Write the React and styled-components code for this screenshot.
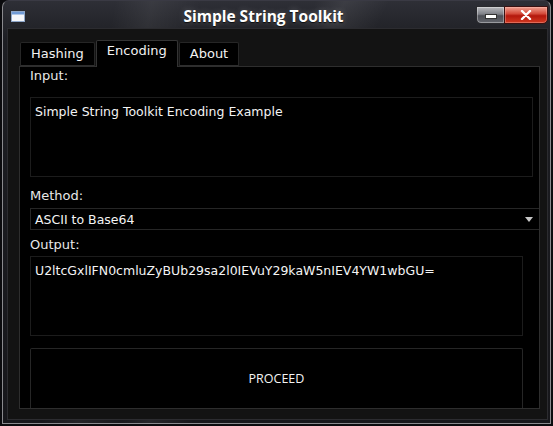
import React from "react";
import styled, { createGlobalStyle } from "styled-components";

const GlobalStyle = createGlobalStyle`
  html, body {
    margin: 0;
    padding: 0;
    background: #0b0b0e;
  }
  body {
    font-family: "DejaVu Sans", Verdana, sans-serif;
    font-size: 12px;
    color: #f0f0f0;
  }
`;

function App() {
  return (
    <>
      <GlobalStyle />
      <Window>
        <TitleBar>
          <AppIcon>
            <svg width="14" height="11" viewBox="0 0 14 11">
              <rect x="0.5" y="0.5" width="13" height="10" fill="#f4f6fa" stroke="#8ea6c8" />
              <rect x="1" y="1" width="12" height="2.5" fill="#6f9ad6" />
            </svg>
          </AppIcon>
          <Title>Simple String Toolkit</Title>
          <Controls>
            <MinButton>
              <span />
            </MinButton>
            <CloseButton>
              <svg width="12" height="10" viewBox="0 0 12 10">
                <path d="M2 1 L10 9 M10 1 L2 9" stroke="#fff" strokeWidth="2.4" strokeLinecap="round" />
              </svg>
            </CloseButton>
          </Controls>
        </TitleBar>
        <Client>
          <Tabs>
            <Tab>Hashing</Tab>
            <Tab active>Encoding</Tab>
            <Tab>About</Tab>
          </Tabs>
          <Pane>
            <Label>Input:</Label>
            <TextBox $mt={13} $right={6}>Simple String Toolkit Encoding Example</TextBox>
            <Label $mt={11}>Method:</Label>
            <Combo>
              ASCII to Base64
              <Arrow />
            </Combo>
            <Label $mt={7}>Output:</Label>
            <TextBox $mt={3} $right={16}>U2ltcGxlIFN0cmluZyBUb29sa2l0IEVuY29kaW5nIEV4YW1wbGU=</TextBox>
            <Proceed>PROCEED</Proceed>
          </Pane>
        </Client>
      </Window>
    </>
  );
}

const Window = styled.div`
  box-sizing: border-box;
  width: 549px;
  height: 424px;
  margin: 0 2px;
  display: flex;
  flex-direction: column;
  border: 1px solid #8a8a8e;
  border-top-color: #3a3a44;
  border-radius: 7px 7px 0 0;
  background:
    linear-gradient(115deg, transparent 42%, rgba(255,255,255,0.07) 46%, transparent 52%),
    linear-gradient(100deg, transparent 18%, rgba(255,255,255,0.06) 24%, transparent 32%),
    linear-gradient(180deg, #2e2f36 0%, #1d1e23 40px, #17171b 100%);
  padding: 0 2px 3px 4px;
`;

const TitleBar = styled.div`
  height: 27px;
  display: flex;
  align-items: flex-start;
`;

const AppIcon = styled.div`
  margin: 10px 0 0 4px;
  width: 14px;
  height: 11px;
  display: flex;
`;

const Title = styled.div`
  flex: 1;
  text-align: center;
  padding: 4px 0 0 26px;
  font-family: "Open Sans", "DejaVu Sans", sans-serif;
  font-weight: 700;
  font-size: 15.5px;
  color: #fff;
  text-shadow: 0 0 6px rgba(255,255,255,0.25), 0 1px 1px #000;
`;

const Controls = styled.div`
  display: flex;
  margin: 5px 0 0 0;
`;

const MinButton = styled.div`
  box-sizing: border-box;
  width: 28px;
  height: 18px;
  border: 1px solid #2a2a2e;
  border-right: none;
  border-radius: 0 0 0 5px;
  background: linear-gradient(180deg, #b8b9bd 0%, #7d7f86 45%, #4c4e55 55%, #64666d 100%);
  box-shadow: inset 0 0 0 1px rgba(255,255,255,0.35);
  display: flex;
  align-items: center;
  justify-content: center;

  span {
    display: block;
    width: 10px;
    height: 3px;
    margin-top: 3px;
    background: #fff;
    border: 1px solid #333;
  }
`;

const CloseButton = styled.div`
  box-sizing: border-box;
  width: 44px;
  height: 18px;
  border: 1px solid #3a1010;
  border-radius: 0 0 5px 0;
  background: linear-gradient(180deg, #f0a090 0%, #d44a3a 42%, #b3170c 55%, #d23a22 100%);
  box-shadow: inset 0 0 0 1px rgba(255,200,190,0.35);
  display: flex;
  align-items: center;
  justify-content: center;
`;

const Client = styled.div`
  flex: 1;
  background: #131313;
  border: 1px solid #2c2c30;
  padding: 11px 7px 10px 11px;
  display: flex;
  flex-direction: column;
`;

const Tabs = styled.div`
  display: flex;
  align-items: flex-end;
  height: 26px;
  padding-left: 1px;
  gap: 1px;
`;

const Tab = styled.div`
  box-sizing: border-box;
  height: ${(p) => (p.active ? "27px" : "24px")};
  margin-bottom: ${(p) => (p.active ? "-1px" : "0")};
  padding: ${(p) => (p.active ? "2px 10px 0" : "3px 10px 0")};
  background: #000;
  border: 1px solid ${(p) => (p.active ? "#343434" : "#262626")};
  border-bottom: ${(p) => (p.active ? "none" : "1px solid #2e2e2e")};
  border-radius: 2px 2px 0 0;
  font-size: 13px;
  color: #f2f2f2;
  position: relative;
  z-index: ${(p) => (p.active ? 1 : 0)};
`;

const Pane = styled.div`
  flex: 1;
  background: #000;
  border: 1px solid #2e2e2e;
  padding: 0 0 0 10px;
  display: flex;
  flex-direction: column;
`;

const Label = styled.div`
  margin-top: ${(p) => p.$mt || 1}px;
  font-size: 13px;
  line-height: 16px;
  color: #e8e8e8;
`;

const TextBox = styled.div`
  box-sizing: border-box;
  margin-top: ${(p) => p.$mt}px;
  margin-right: ${(p) => p.$right}px;
  height: 80px;
  border: 1px solid #1c1c1c;
  padding: 6px 4px;
  font-size: 12.5px;
  line-height: 16px;
  color: #f4f4f4;
`;

const Combo = styled.div`
  box-sizing: border-box;
  margin-top: 4px;
  height: 22px;
  border: 1px solid #262626;
  border-right: none;
  padding: 1px 4px 0;
  font-size: 12.5px;
  line-height: 16px;
  color: #f4f4f4;
  display: flex;
  justify-content: space-between;
  align-items: center;
`;

const Arrow = styled.span`
  width: 0;
  height: 0;
  margin-right: 2px;
  border-left: 4px solid transparent;
  border-right: 4px solid transparent;
  border-top: 5px solid #c8c8c8;
`;

const Proceed = styled.div`
  box-sizing: border-box;
  margin: 12px 16px 0 0;
  flex: 1;
  border: 1px solid #262626;
  border-bottom: none;
  border-radius: 2px 2px 0 0;
  display: flex;
  align-items: center;
  justify-content: center;
  font-family: "Open Sans", "DejaVu Sans", sans-serif;
  font-size: 12.5px;
  color: #f4f4f4;
`;

export default App;
